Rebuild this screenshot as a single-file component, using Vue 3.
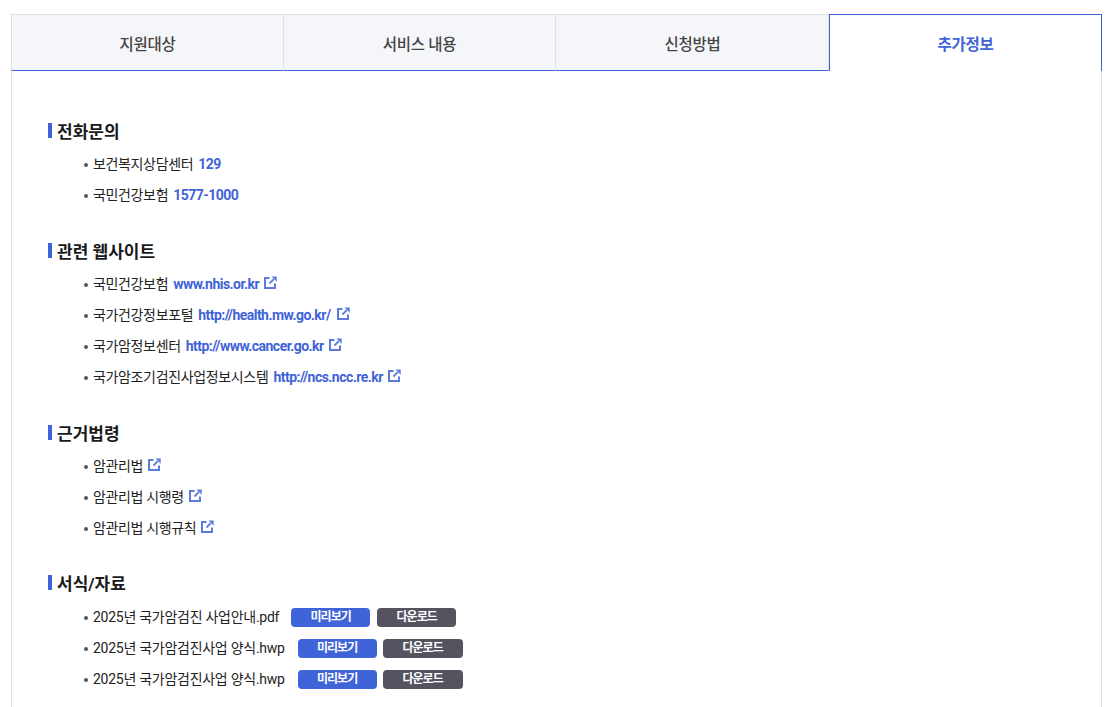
<script setup>
const tabs = [
  { label: '지원대상' },
  { label: '서비스 내용' },
  { label: '신청방법' },
  { label: '추가정보', active: true }
]
const sections = [
  { title: '전화문의', items: [
    { text: '보건복지상담센터', value: '129' },
    { text: '국민건강보험', value: '1577-1000' }
  ] },
  { title: '관련 웹사이트', items: [
    { text: '국민건강보험', value: 'www.nhis.or.kr', ext: true },
    { text: '국가건강정보포털', value: 'http://health.mw.go.kr/', ext: true, wide: true },
    { text: '국가암정보센터', value: 'http://www.cancer.go.kr', ext: true },
    { text: '국가암조기검진사업정보시스템', value: 'http://ncs.ncc.re.kr', ext: true }
  ] },
  { title: '근거법령', items: [
    { text: '암관리법', ext: true },
    { text: '암관리법 시행령', ext: true },
    { text: '암관리법 시행규칙', ext: true }
  ] }
]
const files = ['2025년 국가암검진 사업안내.pdf', '2025년 국가암검진사업 양식.hwp', '2025년 국가암검진사업 양식.hwp']
</script>

<template>
  <div class="page">
    <div class="tabs">
      <div v-for="t in tabs" :key="t.label" class="tab" :class="{ active: t.active }">{{ t.label }}</div>
    </div>
    <div class="panel">
      <section v-for="s in sections" :key="s.title" class="section">
        <h3 class="heading">{{ s.title }}</h3>
        <ul class="list">
          <li v-for="i in s.items" :key="i.text" class="item">
            <span>{{ i.text }}</span>
            <a v-if="i.value" class="link">{{ i.value }}</a>
            <svg v-if="i.ext" class="ext" :class="{ wide: i.wide }" viewBox="0 0 13 13" aria-hidden="true">
              <path d="M5.500 2H1V12H11V7.500" fill="none" stroke="#5b7be0" stroke-width="2" />
              <path d="M5.500 7.500L9.800 3.200" fill="none" stroke="#5b7be0" stroke-width="1.800" />
              <path d="M7.500 0.500H12.700V5.700Z" fill="#5b7be0" />
            </svg>
          </li>
        </ul>
      </section>
      <section class="section">
        <h3 class="heading">서식/자료</h3>
        <ul class="list files">
          <li v-for="(f, n) in files" :key="n" class="item file">
            <span class="fname">{{ f }}</span>
            <button class="btn primary">미리보기</button>
            <button class="btn dark">다운로드</button>
          </li>
        </ul>
      </section>
    </div>
  </div>
</template>

<style>
html, body { margin: 0; background: #fff; overflow: hidden; }
</style>

<style scoped>
.page {
  padding: 14px 11px 0;
  width: 1091px;
  height: 693px;
  overflow: hidden;
  font-family: Roboto, "Noto Sans CJK KR", sans-serif;
  color: #222;
}
.tabs { display: flex; height: 57px; }
.tab {
  width: 272px;
  box-sizing: border-box;
  display: flex;
  align-items: center;
  justify-content: center;
  background: #f5f6fa;
  border: 1px solid #dfe1e6;
  border-left: 0;
  border-bottom: 1px solid #3f63d9;
  font-size: 15.5px;
  letter-spacing: -0.3px;
  font-weight: 500;
  color: #444;
}
.tab:first-child { width: 273px; border-left: 1px solid #dfe1e6; }
.tab:nth-child(3) { width: 273px; padding-left: 1px; }
.tab.active {
  flex: 1;
  background: #fff;
  border: 1px solid #3f63d9;
  border-bottom: 0;
  color: #3f63d9;
  font-weight: 700;
}
.panel {
  border: 1px solid #e0e0e0;
  border-top: 0;
  padding: 50px 36px 0;
  height: 640px;
  box-sizing: border-box;
}
.section { margin-bottom: 30px; }
.section:nth-child(3) { margin-bottom: 29px; }
.heading {
  margin: 0;
  height: 24px;
  line-height: 23px;
  font-size: 17px;
  font-weight: 700;
  color: #1a1a1a;
  padding-left: 9px;
  position: relative;
}
.heading::before {
  content: "";
  position: absolute;
  left: 0;
  top: 2px;
  width: 4px;
  height: 15px;
  background: #3f63d9;
}
.list { list-style: none; margin: 4px 0 0; padding: 0 0 0 36px; }
.list.files { margin-top: 5px; }
.item {
  height: 31px;
  line-height: 31px;
  font-size: 14px;
  letter-spacing: -0.35px;
  color: #222;
  position: relative;
  padding-left: 9px;
  display: flex;
  align-items: center;
  white-space: nowrap;
}
.item::before {
  content: "";
  position: absolute;
  left: 0;
  top: 14px;
  width: 4px;
  height: 4px;
  border-radius: 50%;
  background: #555;
}
.link { color: #3f63d9; font-weight: 700; letter-spacing: -0.53px; margin-left: 5px; }
.ext { width: 13px; height: 13px; margin-left: 5px; margin-top: -4px; }
.ext.wide { margin-left: 6px; }
.fname { margin-right: 12px; letter-spacing: -0.27px; }
.file:not(:first-child) .fname { margin-right: 13px; }
.btn {
  border: 0;
  border-radius: 4px;
  height: 19px;
  width: 79px;
  padding: 0;
  font-family: inherit;
  font-size: 12px;
  font-weight: 700;
  letter-spacing: -1px;
  line-height: 19px;
  color: #fff;
  margin-right: 7px;
}
.file:not(:first-child) .primary { margin-right: 6px; }
.file:not(:first-child) .dark { width: 80px; }
.primary { background: #3f63d9; }
.dark { background: #54535f; }
</style>
